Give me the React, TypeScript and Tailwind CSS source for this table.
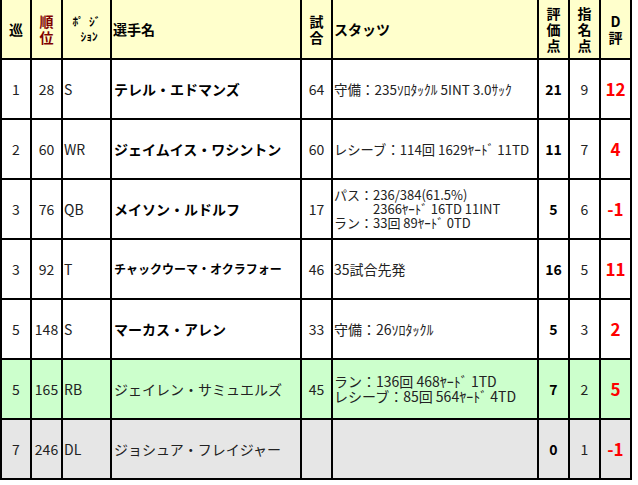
import React from 'react';

type Row = {
  round: string;
  pick: string;
  pos: string;
  name: string;
  nameBold: boolean;
  nameSmall?: boolean;
  games: string;
  stats: string[];
  statsCls: string;
  score: string;
  pickPt: string;
  grade: string;
  bg: string;
};

const ROWS: Row[] = [
  { round: '1', pick: '28', pos: 'S', name: 'テレル・エドマンズ', nameBold: true, games: '64', stats: ['守備：235ｿﾛﾀｯｸﾙ 5INT 3.0ｻｯｸ'], statsCls: 'text-[13.5px] leading-[15px]', score: '21', pickPt: '9', grade: '12', bg: 'bg-white' },
  { round: '2', pick: '60', pos: 'WR', name: 'ジェイムイス・ワシントン', nameBold: true, games: '60', stats: ['レシーブ：114回 1629ﾔｰﾄﾞ 11TD'], statsCls: 'text-[13.3px] leading-[15px]', score: '11', pickPt: '7', grade: '4', bg: 'bg-white' },
  { round: '3', pick: '76', pos: 'QB', name: 'メイソン・ルドルフ', nameBold: true, games: '17', stats: ['パス：236/384(61.5%)', '　　　2366ﾔｰﾄﾞ 16TD 11INT', 'ラン：33回 89ﾔｰﾄﾞ 0TD'], statsCls: 'text-[13px] leading-[14px]', score: '5', pickPt: '6', grade: '-1', bg: 'bg-white' },
  { round: '3', pick: '92', pos: 'T', name: 'チャックウーマ・オクラフォー', nameBold: true, nameSmall: true, games: '46', stats: ['35試合先発'], statsCls: 'text-[14px] leading-[15px]', score: '16', pickPt: '5', grade: '11', bg: 'bg-white' },
  { round: '5', pick: '148', pos: 'S', name: 'マーカス・アレン', nameBold: true, games: '33', stats: ['守備：26ｿﾛﾀｯｸﾙ'], statsCls: 'text-[14px] leading-[15px]', score: '5', pickPt: '3', grade: '2', bg: 'bg-white' },
  { round: '5', pick: '165', pos: 'RB', name: 'ジェイレン・サミュエルズ', nameBold: false, games: '45', stats: ['ラン：136回 468ﾔｰﾄﾞ 1TD', 'レシーブ：85回 564ﾔｰﾄﾞ 4TD'], statsCls: 'text-[14px] leading-[15px]', score: '7', pickPt: '2', grade: '5', bg: 'bg-[#ccffcc]' },
  { round: '7', pick: '246', pos: 'DL', name: 'ジョシュア・フレイジャー', nameBold: false, games: '', stats: [], statsCls: '', score: '0', pickPt: '1', grade: '-1', bg: 'bg-[#e6e6e6]' },
];

const cell = 'h-[58px] flex items-center';
const head = `${cell} bg-[#ffffcc] font-bold text-black`;

export default function App() {
  return (
    <div className="w-[638px] h-[485px] bg-white font-['Noto_Sans_CJK_JP',sans-serif] text-[#222]">
      <div className="inline-grid grid-cols-[28px_29px_47px_188px_29px_204px_29px_29px_29px] gap-[2px] bg-black px-[2px] pb-[2px]">
        {/* header */}
        <div className={`${head} justify-center text-[14px]`}>巡</div>
        <div className={`${head} justify-center text-[14px] leading-[16px] text-center !text-[#800000]`}>
          順<br />位
        </div>
        <div className={`${head} justify-center text-[11.5px] leading-[15px] text-center whitespace-pre`}>
          {'ﾎﾟ  ｼﾞ'}<br />{'  ｼｮﾝ'}
        </div>
        <div className={`${head} text-[14px] pl-[1px]`}>選手名</div>
        <div className={`${head} justify-center text-[14px] leading-[16px] text-center`}>
          試<br />合
        </div>
        <div className={`${head} text-[14px] pl-[1px]`}>スタッツ</div>
        <div className={`${head} justify-center text-[14px] leading-[16px] text-center`}>
          評<br />価<br />点
        </div>
        <div className={`${head} justify-center text-[14px] leading-[16px] text-center`}>
          指<br />名<br />点
        </div>
        <div className={`${head} justify-center text-[14px] leading-[16px] text-center`}>
          D<br />評
        </div>

        {ROWS.map((r, i) => (
          <React.Fragment key={i}>
            <div className={`${cell} ${r.bg} justify-center text-[14px]`}>{r.round}</div>
            <div className={`${cell} ${r.bg} justify-center text-[14px]`}>{r.pick}</div>
            <div className={`${cell} ${r.bg} text-[14px] pl-[1px]`}>{r.pos}</div>
            <div
              className={`${cell} ${r.bg} pl-[2px] whitespace-nowrap ${r.nameBold ? 'font-bold text-black' : ''} ${r.nameSmall ? 'text-[12px]' : 'text-[14px]'}`}
            >
              {r.name}
            </div>
            <div className={`${cell} ${r.bg} justify-center text-[14px]`}>{r.games}</div>
            <div className={`${cell} ${r.bg} pl-[1px]`}>
              <div className={`whitespace-pre ${r.statsCls}`}>
                {r.stats.map((s, j) => (
                  <div key={j}>{s}</div>
                ))}
              </div>
            </div>
            <div className={`${cell} ${r.bg} justify-center font-bold text-[14px] text-black`}>{r.score}</div>
            <div className={`${cell} ${r.bg} justify-center text-[14px]`}>{r.pickPt}</div>
            <div className={`${cell} ${r.bg} justify-center font-bold text-[17px] text-[#ff0000]`}>{r.grade}</div>
          </React.Fragment>
        ))}
      </div>
    </div>
  );
}
